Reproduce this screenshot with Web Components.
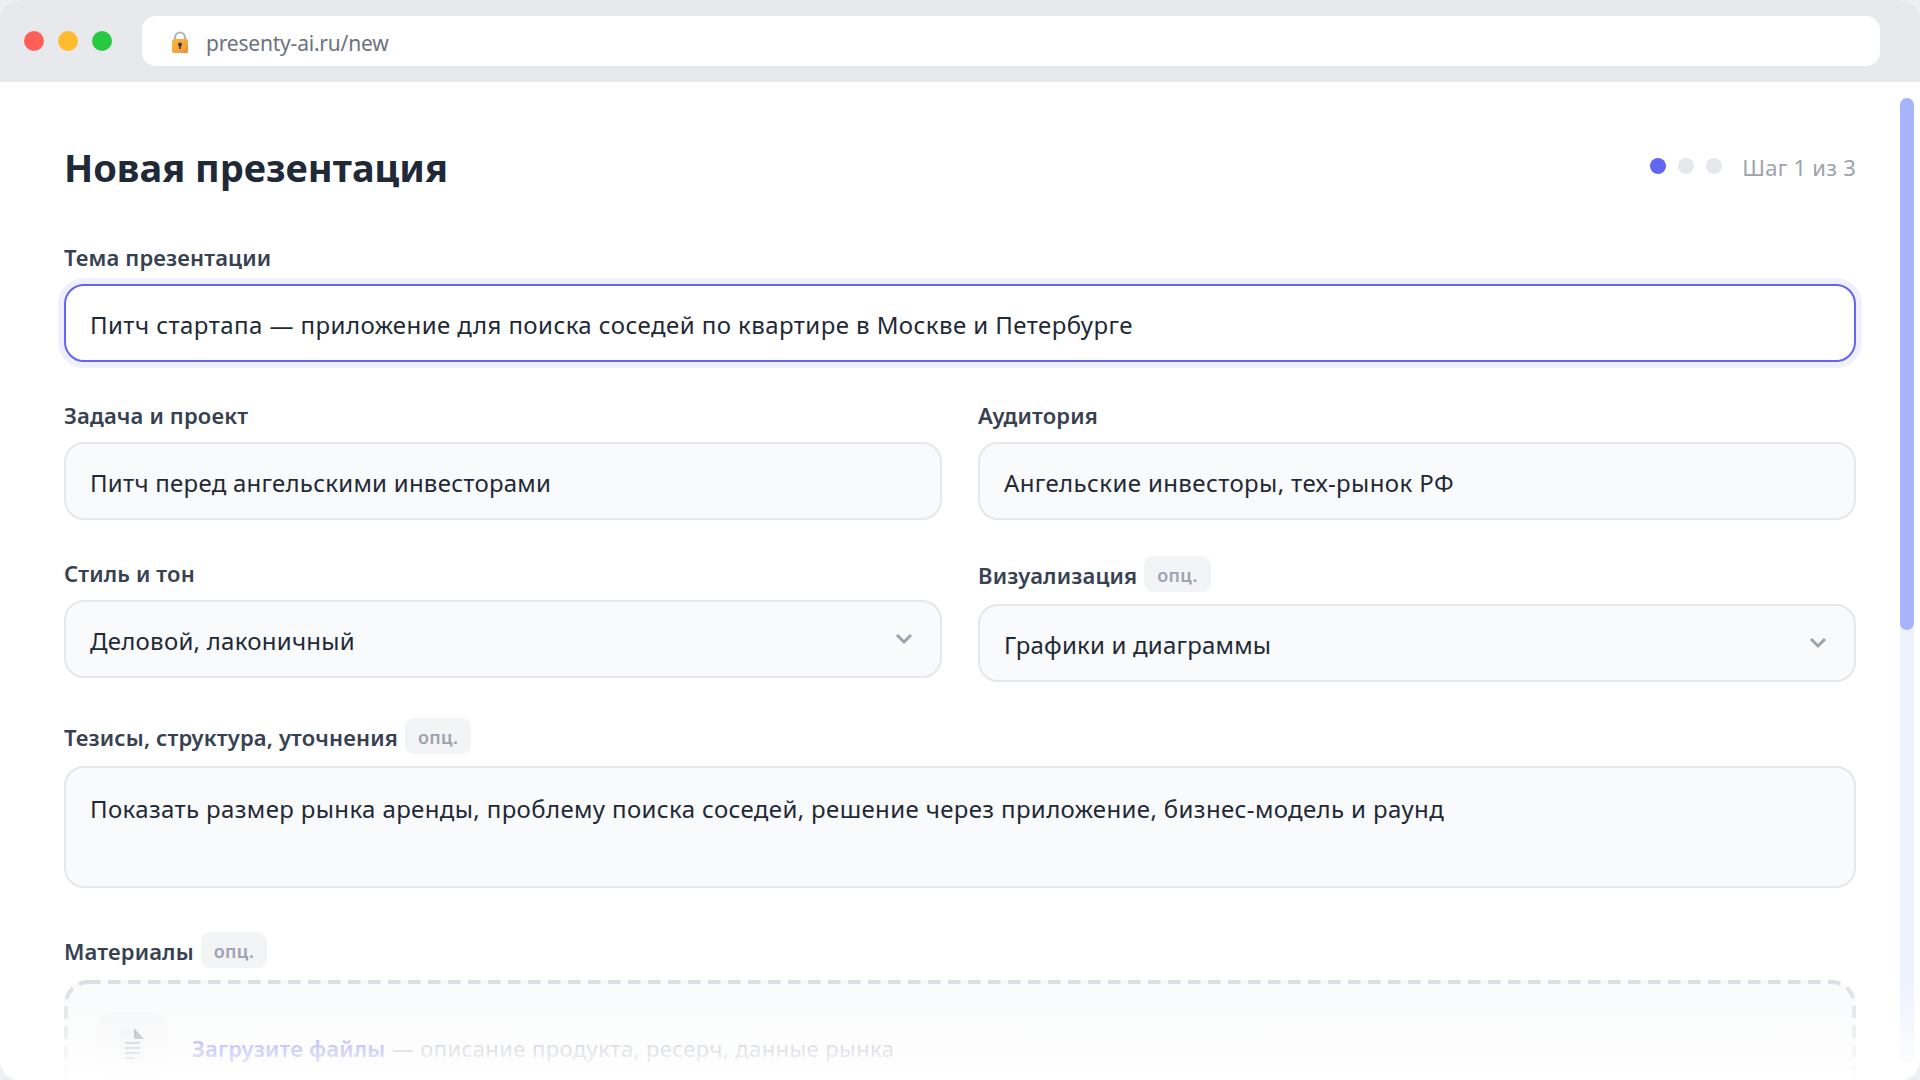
<!DOCTYPE html>
<html lang="ru"><head><meta charset="utf-8"><title>Новая презентация</title>
<style>
html,body{margin:0;padding:0;height:100%;overflow:hidden;background:#eeeff2}
body{font-family:"Noto Sans","Open Sans",sans-serif;color:#1f2937}
</style></head><body>
<browser-window url="presenty-ai.ru/new">
  <form-header title="Новая презентация" step="Шаг 1 из 3"></form-header>
  <form-grid>
    <form-field label="Тема презентации" wide><text-box focused style="letter-spacing:.435px">Питч стартапа — приложение для поиска соседей по квартире в Москве и Петербурге</text-box></form-field>
    <form-field label="Задача и проект"><text-box style="letter-spacing:.25px">Питч перед ангельскими инвесторами</text-box></form-field>
    <form-field label="Аудитория"><text-box>Ангельские инвесторы, тех-рынок РФ</text-box></form-field>
    <form-field label="Стиль и тон"><text-box select style="letter-spacing:.26px">Деловой, лаконичный</text-box></form-field>
    <form-field label="Визуализация" optional><text-box select style="letter-spacing:.2px">Графики и диаграммы</text-box></form-field>
    <form-field label="Тезисы, структура, уточнения" optional wide><text-box multiline style="letter-spacing:.37px">Показать размер рынка аренды, проблему поиска соседей, решение через приложение, бизнес-модель и раунд</text-box></form-field>
    <form-field label="Материалы" optional wide class="materials"><drop-zone></drop-zone></form-field>
  </form-grid>
</browser-window>
<script>
function def(name,html,init){
  customElements.define(name,class extends HTMLElement{
    connectedCallback(){
      if(this.shadowRoot)return;
      const r=this.attachShadow({mode:'open'});
      r.innerHTML=html(this);
      if(init)init(this,r);
    }
  });
}
const FONT='"Noto Sans","Open Sans",sans-serif';
def('browser-window',h=>`<style>
:host{display:flex;flex-direction:column;width:1920px;height:1080px;background:#fff;border-radius:20px;overflow:hidden;position:relative;font-family:${FONT}}
.bar{flex:none;height:82px;box-sizing:border-box;padding:16px 40px 16px 24px;background:#e8e9ed;display:flex;align-items:center}
.lights{display:flex;gap:14px;margin-right:30px}
.lights i{width:20px;height:20px;border-radius:50%;display:block}
.url{flex:1;height:50px;box-sizing:border-box;background:#fff;border-radius:14px;display:flex;align-items:center;padding-left:28px;gap:16px;font-size:21px;color:#6b7280;letter-spacing:-.2px}
.url svg{display:block;margin-top:1px}
.url span{padding-top:3px}
.main{flex:1;box-sizing:border-box;padding:58px 64px 0;overflow:hidden}
.track{position:absolute;left:1900px;top:98px;width:14px;height:965px;border-radius:7px;background:#eef2ff}
.thumb{width:14px;height:532px;border-radius:7px;background:#a5b4fc}
.fade{position:absolute;left:0;right:0;bottom:0;height:100px;background:linear-gradient(to bottom,rgba(255,255,255,0),#fff);pointer-events:none}
</style>
<div class="bar"><div class="lights"><i style="background:#ff5f57"></i><i style="background:#febc2e"></i><i style="background:#28c840"></i></div>
<div class="url"><svg width="20" height="22" viewBox="0 0 20 22"><path d="M5 10V6.5a5 5 0 0 1 10 0V10" fill="none" stroke="#b4b4b8" stroke-width="2.2"/><defs><linearGradient id="g" x1="0" y1="0" x2="1" y2="1"><stop offset="0" stop-color="#fbb63f"/><stop offset=".75" stop-color="#f3a03a"/><stop offset="1" stop-color="#ee7350"/></linearGradient></defs><rect x="2" y="8" width="16" height="14" rx="2" fill="url(#g)"/><circle cx="10" cy="13.5" r="2" fill="#3a3a3a"/><rect x="9.2" y="14" width="1.6" height="4" fill="#3a3a3a"/></svg><span>${h.getAttribute('url')}</span></div></div>
<div class="main"><slot></slot></div>
<div class="track"><div class="thumb"></div></div>
<div class="fade"></div>`);
def('form-header',h=>`<style>
:host{display:flex;align-items:center;justify-content:space-between;height:54px;margin-bottom:46px}
h1{margin:0;font-size:38px;line-height:54px;font-weight:700;color:#1f2937}
.steps{display:flex;align-items:center;gap:12px}
.steps i{width:16px;height:16px;border-radius:50%;background:#e5e7eb;display:block;margin-top:-3px}
.steps i:first-child{background:#6366f1}
.steps span{margin-left:8px;font-size:22px;color:#9ca3af;letter-spacing:.25px}
</style><h1>${h.getAttribute('title')}</h1><div class="steps"><i></i><i></i><i></i><span>${h.getAttribute('step')}</span></div>`);
def('form-grid',()=>`<style>
:host{display:grid;grid-template-columns:1fr 1fr;column-gap:36px;row-gap:36px}
</style><slot></slot>`);
def('form-field',h=>`<style>
:host{display:block;min-width:0}
:host([wide]){grid-column:1 / -1}
:host(.materials){margin-top:8px}
.lab{display:flex;align-items:center;gap:7px;min-height:32px;margin-bottom:12px;font-size:22px;font-weight:600;color:#374151;line-height:30px;letter-spacing:.15px}
.lab>span:first-child{padding-top:2px}
.tag{height:36px;box-sizing:border-box;padding:1px 13px 0;border-radius:9px;background:#f3f4f6;color:#9ca3af;font-size:18px;font-weight:600;display:flex;align-items:center;letter-spacing:.3px}
</style><div class="lab"><span>${h.getAttribute('label')}</span>${h.hasAttribute('optional')?'<span class="tag">опц.</span>':''}</div><slot></slot>`);
def('text-box',h=>`<style>
:host{display:flex;align-items:center;justify-content:space-between;box-sizing:border-box;height:78px;padding:4px 24px 0;border:2px solid #e5e7eb;border-radius:20px;background:#f9fafb;font-size:24px;line-height:36px;color:#1f2937;letter-spacing:.39px}
:host([focused]){background:#fff;border-color:#6366f1;box-shadow:0 0 0 6px rgba(99,102,241,.1)}
:host([multiline]){display:block;height:122px;padding:23px 24px}
svg{flex:none;margin-right:2px;margin-top:-4px}
</style><span><slot></slot></span>${h.hasAttribute('select')?'<svg width="20" height="14" viewBox="0 0 20 14"><path d="M3 3l7 7 7-7" fill="none" stroke="#9ca3af" stroke-width="3"/></svg>':''}`);
def('drop-zone',()=>`<style>
:host{display:flex;gap:24px;position:relative;box-sizing:border-box;height:240px;padding:32px 32px 0;background:#f9fafb;border-radius:24px;align-items:flex-start;font-size:22px;color:#9ca3af;letter-spacing:.41px}
.dash{position:absolute;inset:0;width:100%;height:100%;overflow:visible}
.ico{width:72px;height:72px;border-radius:18px;background:#f3f4f6;display:flex;align-items:center;justify-content:center;flex:none}
.ico svg{margin-top:-5px}
.t{height:72px;display:flex;align-items:center;padding-top:0}
b{font-weight:600;color:#6366f1;letter-spacing:.16px}
</style><svg class="dash"><rect x="2" y="2" width="calc(100% - 4px)" height="calc(100% - 4px)" rx="22" fill="none" stroke="#dcdee4" stroke-width="4" stroke-dasharray="12.5 7.5"/></svg>
<div class="ico"><svg width="30" height="36" viewBox="0 0 30 36"><path d="M3 1h15l9 10v24H3z" fill="#eceef1"/><path d="M17 0l10 11H17z" fill="#8d9098"/><path d="M8 15h15M8 20h15M8 25h15M8 30h9" stroke="#9ca3af" stroke-width="2"/></svg></div>
<div class="t"><span><b>Загрузите файлы</b> — описание продукта, ресерч, данные рынка</span></div>`);
</script>
</body></html>
